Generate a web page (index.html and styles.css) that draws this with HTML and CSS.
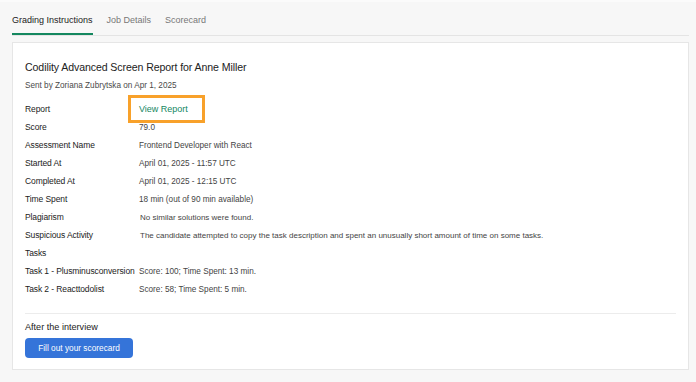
FILE: index.html
```html
<!DOCTYPE html>
<html lang="en">

<head>
    <meta charset="UTF-8">
    <meta name="viewport" content="width=device-width, initial-scale=1.0">
    <title>Grading Instructions</title>
    <link rel="stylesheet" href="styles.css">
</head>

<body>
    <div class="page">

        <!--Tabs-->
        <div class="tabs">
            <div class="tab active">Grading Instructions</div>
            <div class="tab">Job Details</div>
            <div class="tab">Scorecard</div>
        </div>

        <!--Report card-->
        <div class="card">
            <h2 class="title">Codility Advanced Screen Report for Anne Miller</h2>
            <p class="sent">Sent by Zoriana Zubrytska on Apr 1, 2025</p>

            <table class="report">
                <tr>
                    <td class="label">Report</td>
                    <td class="value"><span class="highlight"><a href="#" class="link">View Report</a></span></td>
                </tr>
                <tr>
                    <td class="label">Score</td>
                    <td class="value">79.0</td>
                </tr>
                <tr>
                    <td class="label">Assessment Name</td>
                    <td class="value">Frontend Developer with React</td>
                </tr>
                <tr>
                    <td class="label">Started At</td>
                    <td class="value">April 01, 2025 - 11:57 UTC</td>
                </tr>
                <tr>
                    <td class="label">Completed At</td>
                    <td class="value">April 01, 2025 - 12:15 UTC</td>
                </tr>
                <tr>
                    <td class="label">Time Spent</td>
                    <td class="value">18 min (out of 90 min available)</td>
                </tr>
                <tr>
                    <td class="label">Plagiarism</td>
                    <td class="value small">No similar solutions were found.</td>
                </tr>
                <tr>
                    <td class="label">Suspicious Activity</td>
                    <td class="value small">The candidate attempted to copy the task description and spent an unusually short amount of time on some tasks.</td>
                </tr>
                <tr>
                    <td class="label">Tasks</td>
                    <td class="value"></td>
                </tr>
                <tr>
                    <td class="label">Task 1 - Plusminusconversion</td>
                    <td class="value">Score: 100; Time Spent: 13 min.</td>
                </tr>
                <tr>
                    <td class="label">Task 2 - Reacttodolist</td>
                    <td class="value">Score: 58; Time Spent: 5 min.</td>
                </tr>
            </table>

            <hr class="divider">

            <p class="after">After the interview</p>
            <button class="btn">Fill out your scorecard</button>
        </div>
    </div>
</body>

</html>
```

FILE: styles.css
```css
body {
    margin: 0;
    background-color: #f7f7f7;
    font-family: "Liberation Sans", Arial, sans-serif;
    color: #222;
}

.page {
    border-top: solid 2px #fbfbfb;
    padding: 0 7px 0 12px;
}

.tabs {
    display: flex;
    gap: 14px;
    border-bottom: solid 1px #e4e4e4;
    height: 33px;
}

.tab {
    font-size: 9px;
    line-height: 12px;
    color: #777;
    padding-top: 12px;
    height: 33px;
    box-sizing: border-box;
}

.tab.active {
    color: #222;
    border-bottom: solid 2px #14875f;
}

.card {
    margin-top: 6px;
    background-color: white;
    border: solid 1px #e6e6e6;
    padding: 17px 12px 11px 12px;
}

.title {
    font-size: 10.6px;
    line-height: 14px;
    font-weight: normal;
    margin: 0;
    letter-spacing: -0.1px;
    color: #222;
}

.sent {
    font-size: 8.2px;
    line-height: 11px;
    color: #4a4a4a;
    margin: 6px 0 0 0;
}

.report {
    border-collapse: collapse;
    margin-top: 9px;
}

.report td {
    height: 18px;
    padding: 0;
    font-size: 8.2px;
    line-height: 11px;
    vertical-align: middle;
}

.report .label {
    color: #222;
    width: 114px;
    white-space: nowrap;
    font-size: 8.5px;
    letter-spacing: -0.1px;
}

.value {
    color: #444;
}

.report .small {
    font-size: 8px;
    padding-left: 1px;
}

.highlight {
    display: inline-block;
    border: solid 3px #f8a12a;
    padding: 6px 14px 5px 8px;
    margin: -8px 0 -8px -11px;
    vertical-align: middle;
}

.link {
    color: #14875f;
    text-decoration: none;
    font-size: 9px;
}

.divider {
    border: none;
    border-top: solid 1px #ececec;
    margin: 15px 0 0 0;
}

.after {
    font-size: 9.1px;
    line-height: 12px;
    margin: 7px 0 0 0;
    color: #222;
}

.btn {
    display: block;
    margin-top: 5px;
    background-color: #3574d9;
    color: white;
    border: none;
    border-radius: 4px;
    font-family: inherit;
    font-size: 8.3px;
    width: 108px;
    height: 20px;
    padding: 0;
}
```
